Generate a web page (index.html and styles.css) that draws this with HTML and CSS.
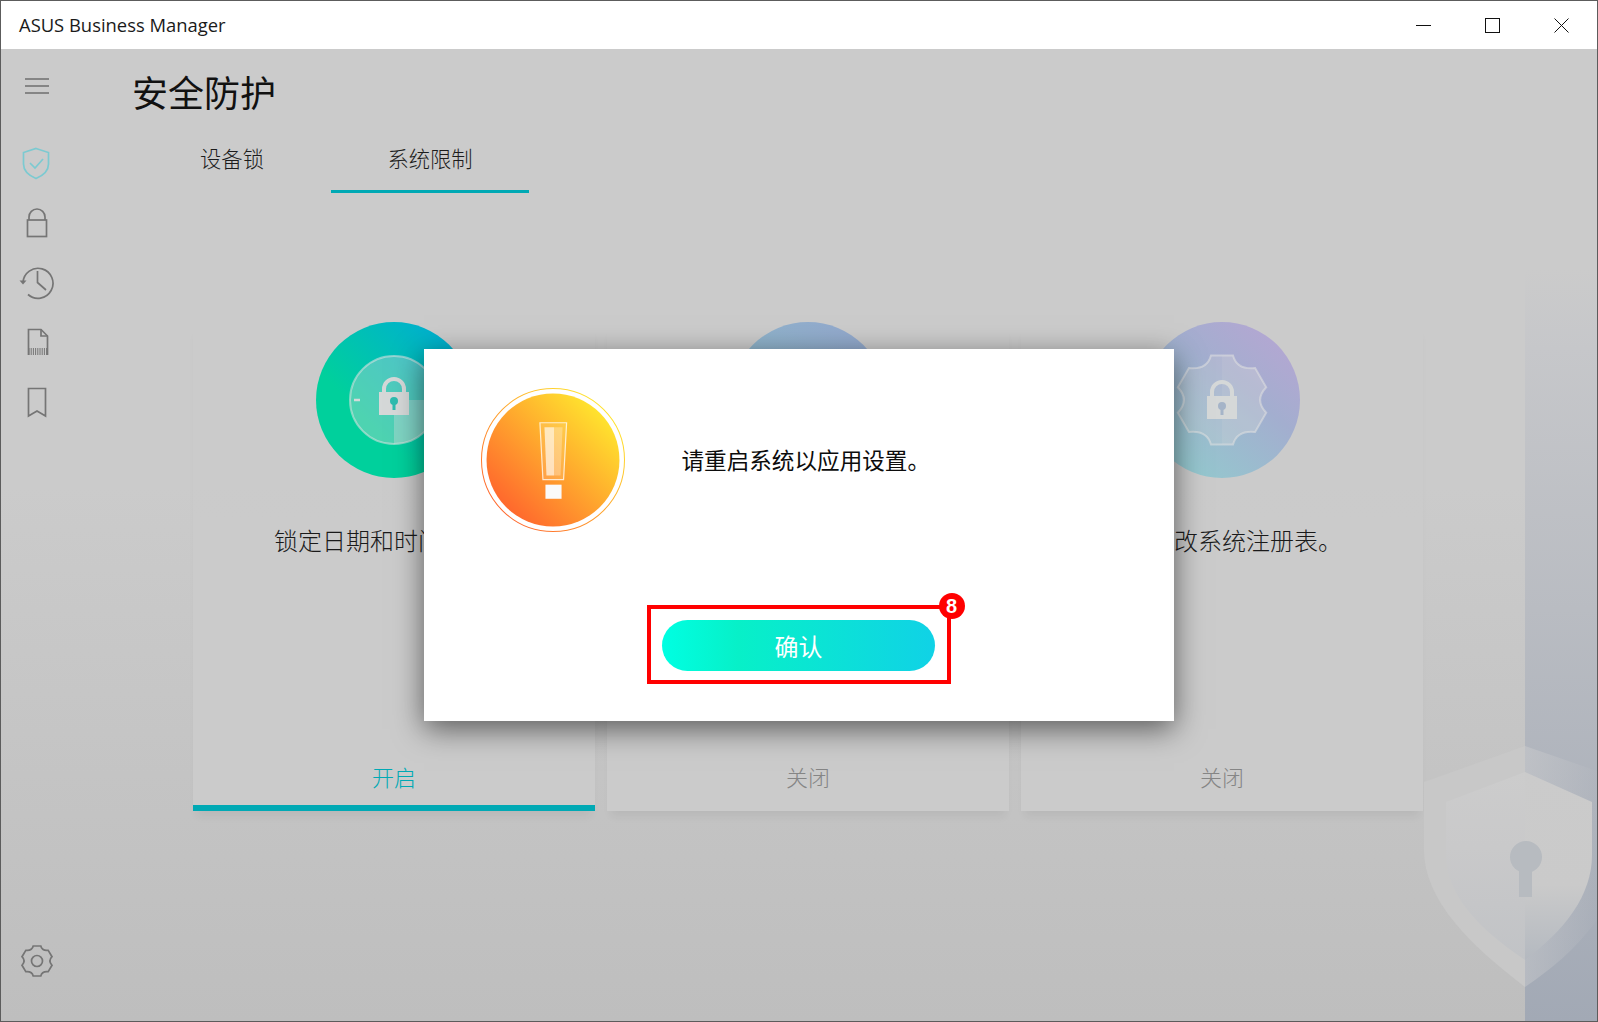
FILE: index.html
```html
<!DOCTYPE html>
<html lang="zh-CN">
<head>
    <meta charset="UTF-8">
    <title>ASUS Business Manager</title>
    <link rel="stylesheet" href="styles.css">
</head>
<body>

<div class="window">
    <div class="titlebar">
        <span class="app-name">ASUS Business Manager</span>
        <div class="win-buttons">
            <div class="win-btn">
                <svg width="15" height="15" viewBox="0 0 15 15"><path d="M0 7.5H15" stroke="#111" fill="none"/></svg>
            </div>
            <div class="win-btn">
                <svg width="15" height="15" viewBox="0 0 15 15"><rect x="0.5" y="0.5" width="14" height="14" stroke="#111" fill="none"/></svg>
            </div>
            <div class="win-btn">
                <svg width="15" height="15" viewBox="0 0 15 15"><path d="M0.5 0.5L14.5 14.5M14.5 0.5L0.5 14.5" stroke="#111" fill="none"/></svg>
            </div>
        </div>
    </div>

    <div class="app-body">
        <div class="sidebar">
            <div class="menu-btn">
                <span class="menu-line"></span>
                <span class="menu-line"></span>
                <span class="menu-line"></span>
            </div>
            <div class="nav-item">
                <svg class="nav-icon shield-icon" viewBox="0 0 36 36"><path d="M17 2.5L29.5 6.5V18C29.5 25 23 30 17 32.5C11 30 4.5 25 4.5 18V6.5Z"/><path d="M11 17l5 5l8-9"/></svg>
            </div>
            <div class="nav-item">
                <svg class="nav-icon" viewBox="0 0 36 36"><rect x="8.5" y="14" width="19" height="16.5"/><path d="M10 14V11a8 8 0 0 1 16 0V14"/></svg>
            </div>
            <div class="nav-item">
                <svg class="nav-icon" viewBox="0 0 36 36"><path d="M4 16.5A15 15 0 1 1 9 28.5"/><path d="M18.5 5V16.5L27 24"/><polygon class="solid" points="0.5,14.5 7.5,14.5 4,18.5"/></svg>
            </div>
            <div class="nav-item">
                <svg class="nav-icon" viewBox="0 0 36 36"><path d="M9.5 29V3.5H22L28.5 10V29"/><path d="M22 3.5V10H28.5"/><path class="thin" d="M10 22V29M12.2 22V29M14.4 22V29M16.6 22V29M18.8 22V29M21 22V29M23.2 22V29M25.4 22V29M27.6 22V29"/></svg>
            </div>
            <div class="nav-item">
                <svg class="nav-icon" viewBox="0 0 36 36"><path d="M9.5 2.5H26.5V30L18 25L9.5 30Z"/></svg>
            </div>
            <div class="settings-btn">
                <svg class="nav-icon" viewBox="-18 -18 36 36"><path d="M-3.8 -15L3.8 -15Q5 -10 11.2 -10.7L15 -4.3Q10.8 0 15 4.3L11.2 10.7Q5 10 3.8 15L-3.8 15Q-5 10 -11.2 10.7L-15 4.3Q-10.8 0 -15 -4.3L-11.2 -10.7Q-5 -10 -3.8 -15Z"/><circle cx="0" cy="0" r="5.5"/></svg>
            </div>
        </div>

        <div class="main">
            <h1 class="page-title">安全防护</h1>
            <div class="tabs">
                <div class="tab">设备锁</div>
                <div class="tab active">系统限制</div>
            </div>

            <div class="cards">
                <div class="card">
                    <div class="badge-circle teal">
                        <svg width="156" height="156" viewBox="-78 -78 156 156">
                            <circle class="ring-fill" r="44"/>
                            <path class="quarter" d="M0 0H44A44 44 0 0 1 0 44Z"/>
                            <path class="dash" d="M-40 0H-34"/>
                            <path class="shackle" d="M-10 -7V-11a10 10 0 0 1 20 0V-7"/>
                            <rect class="lock-body" x="-15" y="-8" width="30" height="23"/>
                            <circle class="keyhole-teal" cx="0" cy="1" r="4"/>
                            <rect class="keyhole-teal" x="-1.5" y="2" width="3" height="8"/>
                        </svg>
                    </div>
                    <p class="card-text">锁定日期和时间设置。</p>
                    <div class="card-status on">开启</div>
                </div>
                <div class="card">
                    <div class="badge-circle blue"></div>
                    <p class="card-text">禁止更改网络设置。</p>
                    <div class="card-status">关闭</div>
                </div>
                <div class="card">
                    <div class="badge-circle violet">
                        <svg width="156" height="156" viewBox="-78 -78 156 156">
                            <path class="gear" d="M-11 -44.6L11 -44.6Q15 -30 33.1 -32L44.2 -12.7Q32 0 44.2 12.7L33.1 32Q15 30 11 44.6L-11 44.6Q-15 30 -33.1 32L-44.2 12.7Q-32 0 -44.2 -12.7L-33.1 -32Q-15 -30 -11 -44.6Z"/>
                            <path class="gear-half" d="M0 -44.6L11 -44.6Q15 -30 33.1 -32L44.2 -12.7Q32 0 44.2 12.7L33.1 32Q15 30 11 44.6L0 44.6Z"/>
                            <path class="shackle" d="M-10 -1V-8a10 10 0 0 1 20 0V-1"/>
                            <rect class="lock-body" x="-15" y="-4" width="30" height="23"/>
                            <circle class="keyhole-violet" cx="0" cy="6" r="4"/>
                            <rect class="keyhole-violet" x="-1.5" y="7" width="3" height="8"/>
                        </svg>
                    </div>
                    <p class="card-text">禁止修改系统注册表。</p>
                    <div class="card-status">关闭</div>
                </div>
            </div>

            <!-- watermark shield, drawn in page coordinates -->
            <svg class="watermark" width="173" height="241" viewBox="1424 746 173 241">
                <defs>
                    <linearGradient id="wmEdge" x1="0" y1="0" x2="1" y2="0">
                        <stop offset="0" stop-color="#d2d2d2" stop-opacity="0.4"/>
                        <stop offset="1" stop-color="#d2d2d2" stop-opacity="0.03"/>
                    </linearGradient>
                    <linearGradient id="wmInnerL" x1="0" y1="0" x2="0" y2="1">
                        <stop offset="0" stop-color="#cccccc"/>
                        <stop offset="0.4" stop-color="#c9c9ca"/>
                        <stop offset="1" stop-color="#c1c3c6"/>
                    </linearGradient>
                    <linearGradient id="wmInnerR" x1="0" y1="0" x2="0" y2="1">
                        <stop offset="0" stop-color="#cbcbcb"/>
                        <stop offset="0.6" stop-color="#cacaca"/>
                        <stop offset="1" stop-color="#b4b9c0"/>
                    </linearGradient>
                </defs>
                <path fill="#c8c8c8" d="M1525 746L1424 782V850C1424 900 1470 945 1525 987Z"/>
                <path fill="url(#wmEdge)" d="M1525 746L1597 771V920C1575 950 1550 970 1525 987Z"/>
                <path fill="url(#wmInnerL)" d="M1525 772L1446 802V855C1446 895 1480 930 1525 960Z"/>
                <path fill="url(#wmInnerR)" d="M1525 772L1592 802V855C1592 895 1565 930 1525 960Z"/>
                <circle fill="#b7bbc0" cx="1526" cy="857" r="16"/>
                <rect fill="#b7bbc0" x="1519" y="865" width="13" height="32"/>
            </svg>

            <div class="scrim">
                <div class="dialog">
                    <div class="dialog-row">
                        <svg class="alert-icon" width="144" height="144" viewBox="0 0 143 143">
                            <defs>
                                <linearGradient id="alertGrad" x1="0.15" y1="0.85" x2="0.85" y2="0.15">
                                    <stop offset="0" stop-color="#ff692d"/>
                                    <stop offset="1" stop-color="#ffe22e"/>
                                </linearGradient>
                            </defs>
                            <circle cx="71.5" cy="71.5" r="71" fill="none" stroke="url(#alertGrad)"/>
                            <circle cx="71.5" cy="71.5" r="66" fill="url(#alertGrad)"/>
                            <polygon points="58.5,34.5 85,34.5 82,91 61.5,91" fill="#fff" fill-opacity="0.12" stroke="#fff" stroke-opacity="0.75" stroke-width="1.2"/>
                            <polygon points="63,39 72.5,39 72.5,87 65,87" fill="#fff" fill-opacity="0.65"/>
                            <polygon points="72.5,39 81,39 79,87 72.5,87" fill="#fff" fill-opacity="0.28"/>
                            <rect x="64" y="96" width="16" height="14" fill="#fafafa"/>
                        </svg>
                        <p class="dialog-text">请重启系统以应用设置。</p>
                    </div>
                    <div class="mark-box">
                        <button class="ok-btn">确认</button>
                        <span class="mark-num">8</span>
                    </div>
                </div>
            </div>
        </div>
    </div>
</div>

</body>
</html>
```

FILE: styles.css
```css
* {
    box-sizing: border-box;
}
html, body {
    margin: 0;
    height: 100%;
    overflow: hidden;
}
body {
    font-family: "Noto Sans CJK SC", "Noto Sans", sans-serif;
    background-color: #fff;
}
.window {
    height: 1022px;
    border: 1px solid #5c5c5c;
    display: flex;
    flex-direction: column;
}
.titlebar {
    height: 48px;
    background-color: #fff;
    display: flex;
    align-items: center;
    justify-content: space-between;
    padding-left: 18px;
}
.app-name {
    font-family: "Open Sans", sans-serif;
    font-size: 18.4px;
    color: #1a1a1a;
    margin-bottom: 2px;
}
.win-buttons {
    display: flex;
    padding-right: 1px;
}
.win-btn {
    width: 69px;
    height: 48px;
    display: flex;
    align-items: center;
    justify-content: center;
}
.win-btn svg {
    display: block;
}
.app-body {
    flex: 1;
    display: flex;
    min-height: 0;
    background: linear-gradient(to bottom, #cbcbcb 0, #cbcbcb 45%, #bebebe 100%);
}

/* left rail */
.sidebar {
    width: 74px;
    flex-shrink: 0;
    padding-right: 2px;
    display: flex;
    flex-direction: column;
    align-items: center;
}
.menu-btn {
    height: 74px;
    margin-bottom: 11px;
    display: flex;
    flex-direction: column;
    justify-content: center;
    gap: 5px;
}
.menu-line {
    display: block;
    width: 24px;
    height: 2px;
    background-color: #858585;
}
.nav-item {
    height: 60px;
    display: flex;
    align-items: center;
    justify-content: center;
}
.nav-icon {
    width: 36px;
    height: 36px;
    display: block;
    fill: none;
    stroke: #757575;
    stroke-width: 1.7;
}
.nav-icon .solid {
    fill: #757575;
    stroke: none;
}
.nav-icon .thin {
    stroke-width: 1;
}
.shield-icon {
    stroke: #7ccad1;
}
.settings-btn {
    margin-top: auto;
    margin-bottom: 42px;
}

/* main column */
.main {
    flex: 1;
    position: relative;
    overflow: hidden;
    padding-top: 20px;
    background: linear-gradient(to bottom, #cbcbcb 0, #cbcbcb 220px, #c6c7ca 300px, #b9bcc2 560px, #a2a9b5 100%) right top / 72px 100% no-repeat;
}
.page-title {
    margin: 0 0 30px 57px;
    font-size: 36px;
    line-height: 44px;
    font-weight: 400;
    color: #111;
}
.tabs {
    display: flex;
    margin-left: 58px;
}
.tab {
    width: 198px;
    padding-bottom: 17px;
    border-bottom: 3px solid transparent;
    font-size: 21.3px;
    line-height: 30px;
    font-weight: 300;
    text-align: center;
    color: #1c1c1c;
}
.tab.active {
    border-bottom-color: #00a9b4;
}
.cards {
    display: flex;
    gap: 12px;
    margin: 129px 0 0 118px;
}
.card {
    width: 402px;
    height: 489px;
    display: flex;
    flex-direction: column;
    align-items: center;
    background: linear-gradient(to bottom, rgba(204,204,204,0) 45px, #cbcbcb 200px, #cbcbcb 100%);
    box-shadow: 0 9px 9px -4px rgba(0,0,0,0.06);
}
.badge-circle {
    width: 156px;
    height: 156px;
    border-radius: 50%;
    flex-shrink: 0;
}
.badge-circle svg {
    display: block;
}
.teal {
    background: linear-gradient(45deg, #00d09c 35%, #00aed2 90%);
}
.blue {
    background: linear-gradient(45deg, #8cbcc9 20%, #93a8cd 90%);
}
.violet {
    background: linear-gradient(40deg, #95c6ce 18%, #a3aecf 60%, #b3a7d2 88%);
}
.ring-fill {
    fill: rgba(215,215,215,0.36);
    stroke: rgba(225,225,225,0.55);
    stroke-width: 2;
}
.quarter {
    fill: rgba(220,220,220,0.35);
}
.dash {
    stroke: #d6d9d9;
    stroke-width: 2.5;
    fill: none;
}
.shackle {
    fill: none;
    stroke: #d5d8d8;
    stroke-width: 4;
}
.lock-body {
    fill: #d5d8d8;
}
.keyhole-teal {
    fill: #2fbcaf;
}
.keyhole-violet {
    fill: #a5b4c8;
}
.gear {
    fill: rgba(215,215,215,0.25);
    stroke: rgba(225,225,225,0.55);
    stroke-width: 2;
}
.gear-half {
    fill: rgba(225,225,225,0.12);
}
.card-text {
    margin: 46px 0 0;
    font-size: 24px;
    line-height: 32px;
    font-weight: 300;
    color: #1a1a1a;
}
.card-status {
    margin-top: auto;
    width: 100%;
    height: 62px;
    padding-bottom: 2px;
    border-bottom: 6px solid transparent;
    display: flex;
    align-items: center;
    justify-content: center;
    font-size: 22px;
    font-weight: 300;
    color: #858585;
}
.card-status.on {
    color: #00a9b4;
    border-bottom-color: #00a9b4;
}
.watermark {
    position: absolute;
    right: 0;
    bottom: 34px;
    display: block;
}

/* dialog on top of the page */
.scrim {
    position: absolute;
    inset: 0 0 0 -75px;
    display: flex;
    align-items: center;
    justify-content: center;
}
.dialog {
    width: 750px;
    height: 372px;
    background-color: #fff;
    box-shadow: 0 8px 28px rgba(0,0,0,0.55);
    padding-top: 39px;
    display: flex;
    flex-direction: column;
    align-items: center;
}
.dialog-row {
    width: 100%;
    height: 143px;
    padding-left: 57px;
    display: flex;
    align-items: center;
    margin-bottom: 74px;
}
.alert-icon {
    flex-shrink: 0;
    display: block;
}
.dialog-text {
    margin: 0 0 0 57px;
    font-size: 22.6px;
    line-height: 30px;
    color: #0c0c0c;
}
.mark-box {
    position: relative;
    width: 304px;
    height: 79px;
    border: 4px solid #ff0000;
    display: flex;
    align-items: center;
    justify-content: center;
}
.ok-btn {
    width: 273px;
    height: 51px;
    margin-top: 1px;
    border: none;
    border-radius: 26px;
    padding: 0;
    background: linear-gradient(to right, #00ffe2 0, #07f0c8 28%, #10d2e6 100%);
    font-family: "Noto Sans CJK SC", sans-serif;
    font-size: 24px;
    color: #fff;
}
.mark-num {
    position: absolute;
    top: -16px;
    right: -18px;
    width: 26px;
    height: 26px;
    border-radius: 50%;
    background-color: #ff0000;
    color: #fff;
    font-family: "Liberation Sans", sans-serif;
    font-size: 20px;
    font-weight: 700;
    line-height: 26px;
    text-align: center;
}
```
